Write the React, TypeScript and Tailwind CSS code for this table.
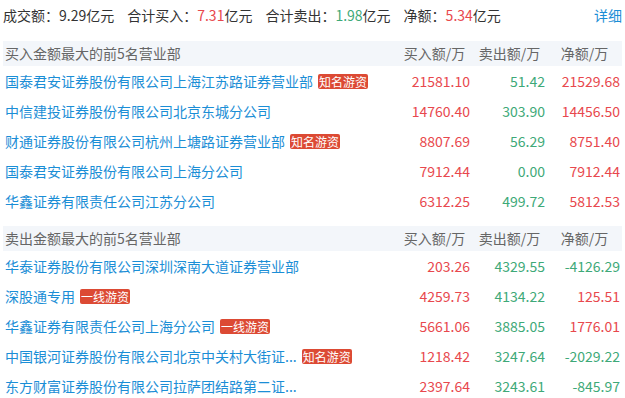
const FONT = { fontFamily: '"Microsoft YaHei", "Noto Sans CJK SC", sans-serif' };

type Row = { name: string; tag?: string; buy: string; sell: string; net: string; netUp: boolean };

const buyRows: Row[] = [
  { name: '国泰君安证券股份有限公司上海江苏路证券营业部', tag: '知名游资', buy: '21581.10', sell: '51.42', net: '21529.68', netUp: true },
  { name: '中信建投证券股份有限公司北京东城分公司', buy: '14760.40', sell: '303.90', net: '14456.50', netUp: true },
  { name: '财通证券股份有限公司杭州上塘路证券营业部', tag: '知名游资', buy: '8807.69', sell: '56.29', net: '8751.40', netUp: true },
  { name: '国泰君安证券股份有限公司上海分公司', buy: '7912.44', sell: '0.00', net: '7912.44', netUp: true },
  { name: '华鑫证券有限责任公司江苏分公司', buy: '6312.25', sell: '499.72', net: '5812.53', netUp: true },
];

const sellRows: Row[] = [
  { name: '华泰证券股份有限公司深圳深南大道证券营业部', buy: '203.26', sell: '4329.55', net: '-4126.29', netUp: false },
  { name: '深股通专用', tag: '一线游资', buy: '4259.73', sell: '4134.22', net: '125.51', netUp: true },
  { name: '华鑫证券有限责任公司上海分公司', tag: '一线游资', buy: '5661.06', sell: '3885.05', net: '1776.01', netUp: true },
  { name: '中国银河证券股份有限公司北京中关村大街证...', tag: '知名游资', buy: '1218.42', sell: '3247.64', net: '-2029.22', netUp: false },
  { name: '东方财富证券股份有限公司拉萨团结路第二证...', buy: '2397.64', sell: '3243.61', net: '-845.97', netUp: false },
];

function Section({ title, rows }: { title: string; rows: Row[] }) {
  return (
    <div>
      <div className="flex h-[25px] items-center bg-[#f3f6fa] pl-[2px] text-[14px] text-[#666]">
        <div className="flex-1">{title}</div>
        <div className="w-[75px] pl-1 text-center">买入额/万</div>
        <div className="w-[75px] pl-1 text-center">卖出额/万</div>
        <div className="w-[75px] pl-1 text-center">净额/万</div>
        <div className="w-[2px]" />
      </div>
      {rows.map((r) => (
        <div key={r.name} className="flex h-[30px] items-center pl-[2px] text-[14px]">
          <div className="flex min-w-0 flex-1 items-center">
            <span className="whitespace-nowrap text-[#1b8ed6]">{r.name}</span>
            {r.tag && (
              <span className="ml-[5px] rounded-[2px] bg-[#dc4a34] px-[1px] text-[12px] leading-[15px] whitespace-nowrap text-white">
                {r.tag}
              </span>
            )}
          </div>
          <div className="w-[75px] text-right text-[#e8484d]">{r.buy}</div>
          <div className="w-[75px] text-right text-[#3ea978]">{r.sell}</div>
          <div className={`w-[75px] text-right ${r.netUp ? 'text-[#e8484d]' : 'text-[#3ea978]'}`}>{r.net}</div>
          <div className="w-[2px]" />
        </div>
      ))}
    </div>
  );
}

export default function App() {
  return (
    <div className="h-[398px] w-[625px] overflow-hidden bg-white pr-[3px] pl-[3px]" style={FONT}>
      <div className="flex h-[31px] items-center text-[14px] text-[#333]">
        <span>
          成交额：<span className="text-[#333]">9.29</span>亿元
        </span>
        <span className="ml-[13px]">
          合计买入：<span className="text-[#e8484d]">7.31</span>亿元
        </span>
        <span className="ml-[13px]">
          合计卖出：<span className="text-[#3ea978]">1.98</span>亿元
        </span>
        <span className="ml-[13px]">
          净额：<span className="text-[#e8484d]">5.34</span>亿元
        </span>
        <span className="ml-auto text-[#1b8ed6]">详细</span>
      </div>
      <div className="mt-[10px]">
        <Section title="买入金额最大的前5名营业部" rows={buyRows} />
      </div>
      <div className="mt-[10px]">
        <Section title="卖出金额最大的前5名营业部" rows={sellRows} />
      </div>
    </div>
  );
}
